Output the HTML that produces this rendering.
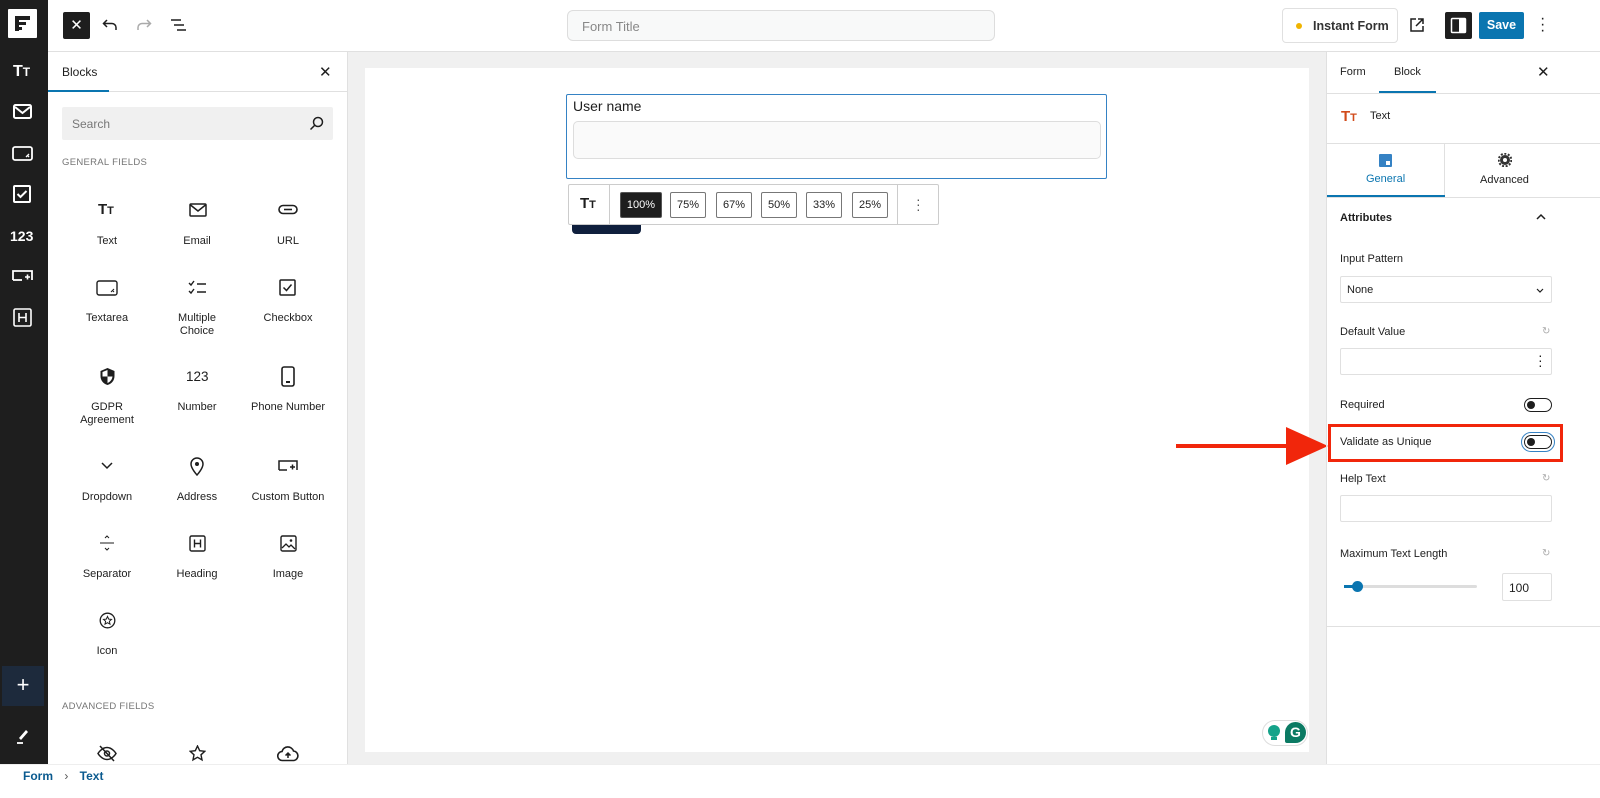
<!DOCTYPE html>
<html><head><meta charset="utf-8"><style>
*{box-sizing:border-box;margin:0;padding:0}
body{width:1600px;height:798px;overflow:hidden;background:#fff;font-family:"Liberation Sans",sans-serif;color:#1e1e1e;position:relative}
.a{position:absolute}
.lbl{font-size:11px;color:#1e1e1e;text-align:center;width:90px;line-height:13px}
.ico{width:24px;height:24px}
.sec{font-size:9.5px;color:#757575;letter-spacing:.3px}
.rl{font-size:11px;color:#1e1e1e}
.inp{border:1px solid #e0e0e0;border-radius:2px;background:#fff}
.pb{border:1px solid #777;border-radius:2px;font-size:11px;height:26px;line-height:24px;text-align:center;width:36px;background:#fff}
.tg{width:28px;height:14px;border:1.3px solid #1e1e1e;border-radius:8px;background:#fff}
.tg:after{content:"";position:absolute;left:2px;top:2px;width:8px;height:8px;border-radius:50%;background:#1e1e1e}
</style></head><body>

<!-- dark left sidebar -->
<div class="a" style="left:0;top:0;width:48px;height:764px;background:#1e1e1e"></div>
<div class="a" style="left:8px;top:9px;width:29px;height:29px;background:#fff;border-radius:1px"></div>
<svg class="a" style="left:14px;top:15px" width="17" height="17" viewBox="0 0 17 17"><rect x="1" y="1" width="15" height="4" fill="#1e1e1e"/><rect x="1" y="1" width="4" height="15" fill="#1e1e1e"/><rect x="1" y="7" width="11" height="3" fill="#1e1e1e"/><rect x="1" y="12" width="7" height="3" fill="#1e1e1e"/></svg>
<div class="a" style="left:13px;top:63px;color:#fff;font-weight:bold;font-size:16px">T<span style="font-size:12px">T</span></div>
<svg class="a" style="left:13px;top:104px" width="20" height="16"><rect x="1" y="1" width="17" height="13" rx="1.5" fill="none" stroke="#fff" stroke-width="2"/><path d="M2 3l7.5 6 7.5-6" fill="none" stroke="#fff" stroke-width="2"/></svg>
<svg class="a" style="left:12px;top:146px" width="22" height="16"><rect x="1" y="1" width="19" height="13" rx="2" fill="none" stroke="#fff" stroke-width="1.8"/><path d="M14 11l3-3M16 11l1-1" stroke="#fff" stroke-width="1.3"/></svg>
<svg class="a" style="left:13px;top:185px" width="19" height="19"><rect x="1" y="1" width="16" height="16" rx="1" fill="none" stroke="#fff" stroke-width="2"/><path d="M4.5 9l3 3 6-6" fill="none" stroke="#fff" stroke-width="2"/></svg>
<div class="a" style="left:10px;top:228px;color:#fff;font-weight:bold;font-size:14px">123</div>
<svg class="a" style="left:12px;top:269px" width="22" height="14"><path d="M1 11V2h19v9" fill="none" stroke="#fff" stroke-width="1.8"/><path d="M13 8h5M15.5 5.5v5" stroke="#fff" stroke-width="1.6"/><path d="M1 11h9" stroke="#fff" stroke-width="1.8"/></svg>
<svg class="a" style="left:13px;top:308px" width="19" height="19"><rect x="1" y="1" width="17" height="17" rx="1.5" fill="none" stroke="#fff" stroke-width="1.6"/><path d="M6 5v9M13 5v9M6 9.5h7" stroke="#fff" stroke-width="1.6"/></svg>
<div class="a" style="left:2px;top:666px;width:42px;height:40px;background:#1d2a3c;color:#fff;font-size:22px;text-align:center;line-height:38px">+</div>
<svg class="a" style="left:15px;top:727px" width="16" height="18"><path d="M4 11l7-8 2 2-7 8z" fill="#fff"/><path d="M2 16h6" stroke="#fff" stroke-width="1.8"/></svg>

<!-- top bar -->
<div class="a" style="left:48px;top:51px;width:1552px;height:1px;background:#e0e0e0"></div>
<div class="a" style="left:63px;top:12px;width:27px;height:27px;background:#1e1e1e;border-radius:2px;color:#fff;text-align:center;line-height:27px;font-size:15px">✕</div>
<svg class="a" style="left:102px;top:18px" width="16" height="14"><path d="M5 2L1.5 5.5 5 9M2 5.5h8a4 4 0 0 1 4 4V12" fill="none" stroke="#1e1e1e" stroke-width="1.5"/></svg>
<svg class="a" style="left:136px;top:18px" width="16" height="14"><path d="M11 2l3.5 3.5L11 9M14 5.5H6a4 4 0 0 0-4 4V12" fill="none" stroke="#aaa" stroke-width="1.5"/></svg>
<svg class="a" style="left:170px;top:18px" width="17" height="14"><path d="M1 2h10M4 7h10M7 12h9" stroke="#1e1e1e" stroke-width="1.5"/></svg>
<div class="a" style="left:567px;top:10px;width:428px;height:31px;border:1px solid #ddd;border-radius:6px;background:#f8f9f9;font-size:13px;color:#888;padding:8px 14px">Form Title</div>
<div class="a" style="left:1282px;top:8px;width:116px;height:35px;border:1px solid #e0e0e0;border-radius:4px;font-size:12.5px;font-weight:bold;color:#333;padding:10px 0 0 30px">Instant Form</div>
<div class="a" style="left:1296px;top:23px;width:6px;height:6px;border-radius:50%;background:#f0b400"></div>
<svg class="a" style="left:1409px;top:17px" width="16" height="16"><path d="M7 2H2v12h12V9M9 2h5v5M14 2L7 9" fill="none" stroke="#1e1e1e" stroke-width="1.5"/></svg>
<div class="a" style="left:1445px;top:12px;width:27px;height:27px;background:#1e1e1e;border-radius:2px"></div>
<svg class="a" style="left:1450px;top:17px" width="17" height="17"><rect x="1.5" y="1.5" width="14" height="14" rx="1" fill="none" stroke="#fff" stroke-width="1.5"/><rect x="9" y="2" width="6" height="13" fill="#fff"/></svg>
<div class="a" style="left:1479px;top:12px;width:45px;height:27px;background:#0a75b0;border-radius:2px;color:#fff;font-size:12.5px;font-weight:bold;text-align:center;line-height:27px">Save</div>
<div class="a" style="left:1540px;top:16px;font-size:16px;line-height:6px;color:#1e1e1e">·<br>·<br>·</div>

<!-- blocks panel -->
<div class="a" style="left:347px;top:52px;width:1px;height:712px;background:#e0e0e0"></div>
<div class="a" style="left:62px;top:65px;font-size:12px">Blocks</div>
<div class="a" style="left:48px;top:91px;width:299px;height:1px;background:#e0e0e0"></div>
<div class="a" style="left:48px;top:90px;width:61px;height:2px;background:#0a75b0"></div>
<div class="a" style="left:319px;top:63px;font-size:15px">✕</div>
<div class="a" style="left:62px;top:107px;width:271px;height:33px;background:#f0f0f0;border-radius:2px;font-size:12px;color:#777;padding:10px">Search</div>
<svg class="a" style="left:309px;top:116px" width="15" height="15"><circle cx="9" cy="6" r="4.5" fill="none" stroke="#1e1e1e" stroke-width="1.5"/><path d="M6 9l-4.5 4.5" stroke="#1e1e1e" stroke-width="1.5"/></svg>
<div class="a sec" style="left:62px;top:157px">GENERAL FIELDS</div>

<!-- row1 -->
<div class="a" style="left:98px;top:201px;font-weight:bold;font-size:15px">T<span style="font-size:11px">T</span></div>
<div class="a lbl" style="left:62px;top:235px">Text</div>
<svg class="a" style="left:189px;top:203px" width="18" height="14"><rect x="1" y="1" width="16" height="12" rx="1" fill="none" stroke="#1e1e1e" stroke-width="1.5"/><path d="M1.5 2l7.5 6 7.5-6" fill="none" stroke="#1e1e1e" stroke-width="1.5"/></svg>
<div class="a lbl" style="left:152px;top:235px">Email</div>
<svg class="a" style="left:278px;top:204px" width="20" height="12"><rect x="1" y="1.5" width="18" height="8" rx="4" fill="none" stroke="#1e1e1e" stroke-width="1.6"/><path d="M6 5.5h8" stroke="#1e1e1e" stroke-width="1.6"/></svg>
<div class="a lbl" style="left:243px;top:235px">URL</div>
<!-- row2 -->
<svg class="a" style="left:96px;top:280px" width="22" height="16"><rect x="1" y="1" width="20" height="14" rx="2" fill="none" stroke="#1e1e1e" stroke-width="1.4"/><path d="M15 12l3-3M17 12l1-1" stroke="#1e1e1e" stroke-width="1.1"/></svg>
<div class="a lbl" style="left:62px;top:312px">Textarea</div>
<svg class="a" style="left:188px;top:280px" width="20" height="16"><path d="M1 3l2 2 3-4M1 11l2 2 3-4M9 4h9M9 12h9" fill="none" stroke="#1e1e1e" stroke-width="1.4"/></svg>
<div class="a lbl" style="left:152px;top:312px">Multiple<br>Choice</div>
<svg class="a" style="left:279px;top:279px" width="18" height="18"><rect x="1" y="1" width="15" height="15" rx="1" fill="none" stroke="#1e1e1e" stroke-width="1.5"/><path d="M4.5 8.5l3 3 5-6" fill="none" stroke="#1e1e1e" stroke-width="1.5"/></svg>
<div class="a lbl" style="left:243px;top:312px">Checkbox</div>
<!-- row3 -->
<svg class="a" style="left:99px;top:367px" width="17" height="19"><path d="M8.5 1L1.5 4v5c0 4.5 3 8 7 9 4-1 7-4.5 7-9V4z" fill="#1e1e1e"/><path d="M8.5 3v6.5H3.5V5z M8.5 9.5h5c-.3 3-2.3 5.5-5 6.5z" fill="#fff"/></svg>
<div class="a lbl" style="left:62px;top:401px">GDPR<br>Agreement</div>
<div class="a" style="left:186px;top:369px;font-size:13.5px">123</div>
<div class="a lbl" style="left:152px;top:401px">Number</div>
<svg class="a" style="left:281px;top:366px" width="14" height="21"><rect x="1" y="1" width="12" height="19" rx="2" fill="none" stroke="#1e1e1e" stroke-width="1.6"/><rect x="5" y="15" width="4" height="2" fill="#1e1e1e"/></svg>
<div class="a lbl" style="left:243px;top:401px">Phone Number</div>
<!-- row4 -->
<svg class="a" style="left:101px;top:462px" width="12" height="8"><path d="M1 1l5 5 5-5" fill="none" stroke="#1e1e1e" stroke-width="1.5"/></svg>
<div class="a lbl" style="left:62px;top:491px">Dropdown</div>
<svg class="a" style="left:190px;top:457px" width="14" height="19"><path d="M7 18s6-6.5 6-11A6 6 0 0 0 1 7c0 4.5 6 11 6 11z" fill="none" stroke="#1e1e1e" stroke-width="1.5"/><circle cx="7" cy="7" r="2" fill="#1e1e1e"/></svg>
<div class="a lbl" style="left:152px;top:491px">Address</div>
<svg class="a" style="left:278px;top:460px" width="20" height="13"><path d="M1 10V1h18v9" fill="none" stroke="#1e1e1e" stroke-width="1.5"/><path d="M12 7h5M14.5 4.5v5M1 10h8" stroke="#1e1e1e" stroke-width="1.5"/></svg>
<div class="a lbl" style="left:243px;top:491px">Custom Button</div>
<!-- row5 -->
<svg class="a" style="left:99px;top:535px" width="16" height="16"><path d="M1 8h14" stroke="#1e1e1e" stroke-width="1"/><path d="M6 3l2-2 2 2M6 13l2 2 2-2" fill="none" stroke="#1e1e1e" stroke-width="1"/></svg>
<div class="a lbl" style="left:62px;top:568px">Separator</div>
<svg class="a" style="left:189px;top:535px" width="17" height="17"><rect x="1" y="1" width="15" height="15" rx="1.5" fill="none" stroke="#1e1e1e" stroke-width="1.4"/><path d="M5.5 4.5v8M11.5 4.5v8M5.5 8.5h6" stroke="#1e1e1e" stroke-width="1.4"/></svg>
<div class="a lbl" style="left:152px;top:568px">Heading</div>
<svg class="a" style="left:280px;top:535px" width="17" height="17"><rect x="1" y="1" width="15" height="15" rx="1.5" fill="none" stroke="#1e1e1e" stroke-width="1.4"/><path d="M2 13l4-4 3 3 2-2 4 4" fill="none" stroke="#1e1e1e" stroke-width="1.3"/><circle cx="11" cy="5.5" r="1.3" fill="#1e1e1e"/></svg>
<div class="a lbl" style="left:243px;top:568px">Image</div>
<!-- row6 -->
<svg class="a" style="left:99px;top:612px" width="17" height="17"><circle cx="8.5" cy="8.5" r="7.3" fill="none" stroke="#1e1e1e" stroke-width="1.3"/><path d="M8.5 4.5l1.2 2.6 2.8.3-2.1 1.9.6 2.8-2.5-1.4-2.5 1.4.6-2.8-2.1-1.9 2.8-.3z" fill="none" stroke="#1e1e1e" stroke-width="1"/></svg>
<div class="a lbl" style="left:62px;top:645px">Icon</div>
<div class="a sec" style="left:62px;top:701px">ADVANCED FIELDS</div>
<svg class="a" style="left:97px;top:745px" width="20" height="17"><path d="M1 8.5s3.5-6 9-6 9 6 9 6-3.5 6-9 6-9-6-9-6z" fill="none" stroke="#1e1e1e" stroke-width="1.5"/><circle cx="10" cy="8.5" r="2.5" fill="none" stroke="#1e1e1e" stroke-width="1.5"/><path d="M3 1l14 15" stroke="#1e1e1e" stroke-width="1.5"/></svg>
<svg class="a" style="left:189px;top:745px" width="17" height="17"><path d="M8.5 1l2.2 4.7 5.1.6-3.8 3.5 1 5.1-4.5-2.6-4.5 2.6 1-5.1L1.2 6.3l5.1-.6z" fill="none" stroke="#1e1e1e" stroke-width="1.4"/></svg>
<svg class="a" style="left:277px;top:746px" width="22" height="16"><path d="M5.5 14.5a4.5 4.5 0 0 1-.5-9A6 6 0 0 1 16.5 5a4.8 4.8 0 0 1 .5 9.5z" fill="none" stroke="#1e1e1e" stroke-width="1.6"/><path d="M11 12V7M8.5 9.5L11 7l2.5 2.5" fill="#1e1e1e" stroke="#1e1e1e" stroke-width="1.5"/></svg>

<!-- canvas -->
<div class="a" style="left:348px;top:52px;width:978px;height:712px;background:#f0f0f0"></div>
<div class="a" style="left:365px;top:68px;width:944px;height:684px;background:#fff"></div>
<div class="a" style="left:566px;top:94px;width:541px;height:85px;border:1.5px solid #3582c4;border-radius:2px"></div>
<div class="a" style="left:573px;top:98px;font-size:14px">User name</div>
<div class="a" style="left:573px;top:121px;width:528px;height:38px;border:1px solid #ddd;border-radius:5px;background:#fafafa"></div>
<div class="a" style="left:572px;top:218px;width:69px;height:16px;background:#0f1f3d;border-radius:0 0 4px 4px"></div>
<div class="a" style="left:568px;top:184px;width:371px;height:41px;border:1px solid #ccc;background:#fff;border-radius:2px"></div>
<div class="a" style="left:609px;top:185px;width:1px;height:39px;background:#ccc"></div>
<div class="a" style="left:897px;top:185px;width:1px;height:39px;background:#ccc"></div>
<div class="a" style="left:580px;top:195px;font-weight:bold;font-size:15px">T<span style="font-size:11px">T</span></div>
<div class="a pb" style="left:620px;top:192px;width:42px;background:#1e1e1e;color:#fff;border-color:#555">100%</div>
<div class="a pb" style="left:670px;top:192px">75%</div>
<div class="a pb" style="left:716px;top:192px">67%</div>
<div class="a pb" style="left:761px;top:192px">50%</div>
<div class="a pb" style="left:806px;top:192px">33%</div>
<div class="a pb" style="left:852px;top:192px">25%</div>
<div class="a" style="left:916px;top:197px;font-size:14px;line-height:5px;color:#555">·<br>·<br>·</div>
<div class="a" style="left:1262px;top:720px;width:46px;height:26px;border:1px solid #ddd;border-radius:13px;background:#fff"></div>
<div class="a" style="left:1268px;top:725px;width:12px;height:12px;border-radius:50%;background:#15a38a"></div>
<div class="a" style="left:1271px;top:737px;width:6px;height:3px;background:#15a38a"></div>
<div class="a" style="left:1285px;top:722px;width:21px;height:21px;border-radius:50% 50% 50% 2px;background:#0b7a63;color:#fff;font-weight:bold;font-size:14px;text-align:center;line-height:21px">G</div>

<!-- arrow -->
<div class="a" style="left:1176px;top:444px;width:115px;height:4px;background:#f1260b"></div>
<svg class="a" style="left:1286px;top:427px" width="42" height="38"><path d="M0 0l42 19L0 38z" fill="#f1260b"/></svg>

<!-- right panel -->
<div class="a" style="left:1326px;top:52px;width:1px;height:712px;background:#e0e0e0"></div>
<div class="a rl" style="left:1340px;top:66px">Form</div>
<div class="a rl" style="left:1394px;top:66px">Block</div>
<div class="a" style="left:1379px;top:91px;width:57px;height:2px;background:#0a75b0"></div>
<div class="a" style="left:1327px;top:93px;width:273px;height:1px;background:#e0e0e0"></div>
<div class="a" style="left:1537px;top:63px;font-size:15px">✕</div>
<div class="a" style="left:1341px;top:108px;font-weight:bold;font-size:15px;color:#d14b1b">T<span style="font-size:11px">T</span></div>
<div class="a rl" style="left:1370px;top:110px">Text</div>
<div class="a" style="left:1327px;top:143px;width:273px;height:1px;background:#e0e0e0"></div>
<div class="a" style="left:1444px;top:143px;width:1px;height:54px;background:#e0e0e0"></div>
<div class="a" style="left:1327px;top:195px;width:118px;height:2px;background:#0a75b0"></div>
<div class="a" style="left:1327px;top:197px;width:273px;height:1px;background:#e0e0e0"></div>
<svg class="a" style="left:1379px;top:154px" width="13" height="13"><rect width="13" height="13" rx="1" fill="#3582c4"/><rect x="7" y="7" width="4" height="4" fill="#fff"/></svg>
<div class="a" style="left:1366px;top:173px;font-size:11px;color:#0a75b0">General</div>
<svg class="a" style="left:1498px;top:153px" width="14" height="14"><circle cx="7" cy="7" r="5" fill="#333"/><circle cx="7" cy="7" r="6.3" fill="none" stroke="#333" stroke-width="2" stroke-dasharray="2 1.6"/><circle cx="7" cy="7" r="2" fill="#fff"/></svg>
<div class="a" style="left:1480px;top:174px;font-size:11px">Advanced</div>
<div class="a" style="left:1340px;top:212px;font-size:11px;font-weight:bold">Attributes</div>
<svg class="a" style="left:1536px;top:213px" width="10" height="7"><path d="M1 6l4-4 4 4" fill="none" stroke="#1e1e1e" stroke-width="1.5"/></svg>
<div class="a rl" style="left:1340px;top:253px">Input Pattern</div>
<div class="a inp" style="left:1340px;top:276px;width:212px;height:27px;font-size:11px;padding:7px 6px">None</div>
<svg class="a" style="left:1536px;top:288px" width="8" height="5"><path d="M1 1l3 3 3-3" fill="none" stroke="#1e1e1e" stroke-width="1.2"/></svg>
<div class="a rl" style="left:1340px;top:326px">Default Value</div>
<div class="a" style="left:1542px;top:326px;font-size:10px;color:#aaa">↻</div>
<div class="a inp" style="left:1340px;top:348px;width:212px;height:27px"></div>
<div class="a" style="left:1538px;top:353px;font-size:14px;line-height:5px">·<br>·<br>·</div>
<div class="a rl" style="left:1340px;top:399px">Required</div>
<div class="a tg" style="left:1524px;top:398px"></div>
<div class="a" style="left:1328px;top:424px;width:235px;height:38px;border:3px solid #f1260b"></div>
<div class="a rl" style="left:1340px;top:436px">Validate as Unique</div>
<div class="a" style="left:1521px;top:432px;width:34px;height:20px;border:1.5px solid #3582c4;border-radius:10px"></div>
<div class="a tg" style="left:1524px;top:435px"></div>
<div class="a rl" style="left:1340px;top:473px">Help Text</div>
<div class="a" style="left:1542px;top:473px;font-size:10px;color:#aaa">↻</div>
<div class="a inp" style="left:1340px;top:495px;width:212px;height:27px"></div>
<div class="a rl" style="left:1340px;top:548px">Maximum Text Length</div>
<div class="a" style="left:1542px;top:548px;font-size:10px;color:#aaa">↻</div>
<div class="a" style="left:1344px;top:585px;width:133px;height:3px;background:#ddd;border-radius:2px"></div>
<div class="a" style="left:1344px;top:585px;width:12px;height:3px;background:#0a75b0"></div>
<div class="a" style="left:1352px;top:581px;width:11px;height:11px;border-radius:50%;background:#0a75b0"></div>
<div class="a inp" style="left:1502px;top:573px;width:50px;height:28px;font-size:12px;padding:7px 6px">100</div>
<div class="a" style="left:1327px;top:626px;width:273px;height:1px;background:#e0e0e0"></div>

<!-- bottom bar -->
<div class="a" style="left:0;top:764px;width:1600px;height:1px;background:#eee"></div>
<div class="a" style="left:23px;top:769px;font-size:12px;font-weight:bold;color:#0a5a8f">Form <span style="color:#555;font-weight:normal;margin:0 8px">›</span> Text</div>
</body></html>
